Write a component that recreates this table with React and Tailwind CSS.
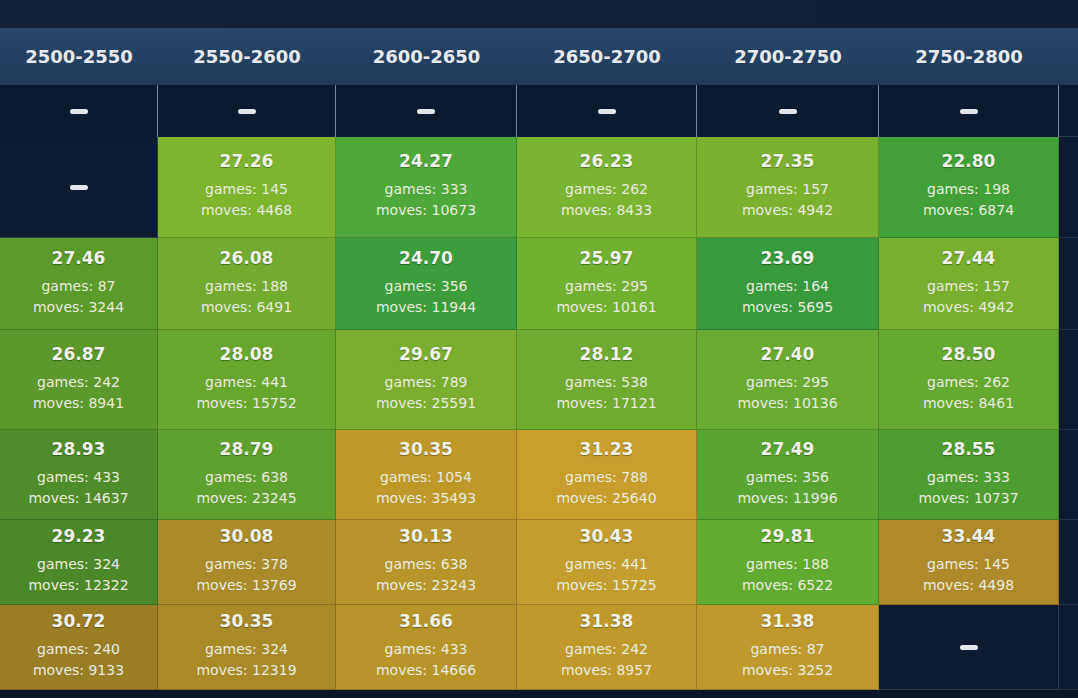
const headers = ["2500-2550", "2550-2600", "2600-2650", "2650-2700", "2700-2750", "2750-2800"];

// null = empty cell (dash)
const rows = [
  {
    h: "h-[101px]",
    cells: [
      null,
      { v: "27.26", g: 145, m: 4468, c: "bg-[#7db52f]" },
      { v: "24.27", g: 333, m: 10673, c: "bg-[#4fa93a]" },
      { v: "26.23", g: 262, m: 8433, c: "bg-[#79b432]" },
      { v: "27.35", g: 157, m: 4942, c: "bg-[#7bb131]" },
      { v: "22.80", g: 198, m: 6874, c: "bg-[#41a038]" },
    ],
  },
  {
    h: "h-[92px]",
    cells: [
      { v: "27.46", g: 87, m: 3244, c: "bg-[#5b9b2b]" },
      { v: "26.08", g: 188, m: 6491, c: "bg-[#71ab30]" },
      { v: "24.70", g: 356, m: 11944, c: "bg-[#3b9d3c]" },
      { v: "25.97", g: 295, m: 10161, c: "bg-[#71b132]" },
      { v: "23.69", g: 164, m: 5695, c: "bg-[#379a3c]" },
      { v: "27.44", g: 157, m: 4942, c: "bg-[#77af30]" },
    ],
  },
  {
    h: "h-[100px]",
    cells: [
      { v: "26.87", g: 242, m: 8941, c: "bg-[#5c992c]" },
      { v: "28.08", g: 441, m: 15752, c: "bg-[#67a72e]" },
      { v: "29.67", g: 789, m: 25591, c: "bg-[#79ae30]" },
      { v: "28.12", g: 538, m: 17121, c: "bg-[#6fab30]" },
      { v: "27.40", g: 295, m: 10136, c: "bg-[#69ab32]" },
      { v: "28.50", g: 262, m: 8461, c: "bg-[#65a930]" },
    ],
  },
  {
    h: "h-[90px]",
    cells: [
      { v: "28.93", g: 433, m: 14637, c: "bg-[#4e8d2a]" },
      { v: "28.79", g: 638, m: 23245, c: "bg-[#5ea12e]" },
      { v: "30.35", g: 1054, m: 35493, c: "bg-[#bf982a]" },
      { v: "31.23", g: 788, m: 25640, c: "bg-[#c79d2c]" },
      { v: "27.49", g: 356, m: 11996, c: "bg-[#5aa532]" },
      { v: "28.55", g: 333, m: 10737, c: "bg-[#4e9d30]" },
    ],
  },
  {
    h: "h-[85px]",
    cells: [
      { v: "29.23", g: 324, m: 12322, c: "bg-[#4b8928]" },
      { v: "30.08", g: 378, m: 13769, c: "bg-[#aa8a2a]" },
      { v: "30.13", g: 638, m: 23243, c: "bg-[#b7952c]" },
      { v: "30.43", g: 441, m: 15725, c: "bg-[#c39d2e]" },
      { v: "29.81", g: 188, m: 6522, c: "bg-[#61ab30]" },
      { v: "33.44", g: 145, m: 4498, c: "bg-[#af8a2c]" },
    ],
  },
  {
    h: "h-[85px]",
    cells: [
      { v: "30.72", g: 240, m: 9133, c: "bg-[#9b7d26]" },
      { v: "30.35", g: 324, m: 12319, c: "bg-[#a98928]" },
      { v: "31.66", g: 433, m: 14666, c: "bg-[#b7952a]" },
      { v: "31.38", g: 242, m: 8957, c: "bg-[#bf992c]" },
      { v: "31.38", g: 87, m: 3252, c: "bg-[#bf992e]" },
      null,
    ],
  },
];

const colW = ["w-[158px]", "w-[178px]", "w-[181px]", "w-[180px]", "w-[182px]", "w-[180px]"];

const Dash = () => <span className="block h-[5px] w-[18px] rounded-sm bg-[#e4e6ea]" />;

const Cell = ({ cell, w }) => {
  if (!cell) {
    return (
      <div className={`${w} shrink-0 flex items-center justify-center border-r border-b border-[#2b3a52] bg-[#0d1a2f]`}>
        <Dash />
      </div>
    );
  }
  return (
    <div
      className={`${w} ${cell.c} shrink-0 flex flex-col items-center justify-center border-r border-b border-black/20 text-[#e9ecde]`}
    >
      <div className="text-[17px] font-bold leading-none mb-[9px] text-[#f1f2ea] [text-shadow:0_1px_1px_rgba(0,0,0,0.35)]">
        {cell.v}
      </div>
      <div className="text-[14px] leading-[21px]">games: {cell.g}</div>
      <div className="text-[14px] leading-[21px]">moves: {cell.m}</div>
    </div>
  );
};

export default function App() {
  return (
    <div className="w-[1078px] h-[698px] overflow-hidden bg-[#0b1628] font-['DejaVu_Sans',Verdana,sans-serif]">
      <div className="h-[28px] bg-gradient-to-r from-[#13233b] to-[#0f1e35]" />
      <div className="flex h-[57px] bg-gradient-to-b from-[#27476a] to-[#1f3b5a]">
        {headers.map((t, i) => (
          <div key={t} className={`${colW[i]} shrink-0 flex items-center justify-center text-[18px] font-bold text-[#e8e9ee]`}>
            {t}
          </div>
        ))}
        <div className="flex-1" />
      </div>
      <div className="flex h-[52px]">
        {headers.map((t, i) => (
          <div key={t} className={`${colW[i]} shrink-0 flex items-center justify-center border-r border-[#7a8698] bg-[#0c1a30]`}>
            <Dash />
          </div>
        ))}
        <div className="flex-1 border-b border-[#2b3a52] bg-[#0c1a30]" />
      </div>
      {rows.map((r, ri) => (
        <div key={ri} className={`flex ${r.h}`}>
          {r.cells.map((c, ci) => (
            <Cell key={ci} cell={c} w={colW[ci]} />
          ))}
          <div className="flex-1 border-b border-[#22324a] bg-[#0d1a30]" />
        </div>
      ))}
    </div>
  );
}
